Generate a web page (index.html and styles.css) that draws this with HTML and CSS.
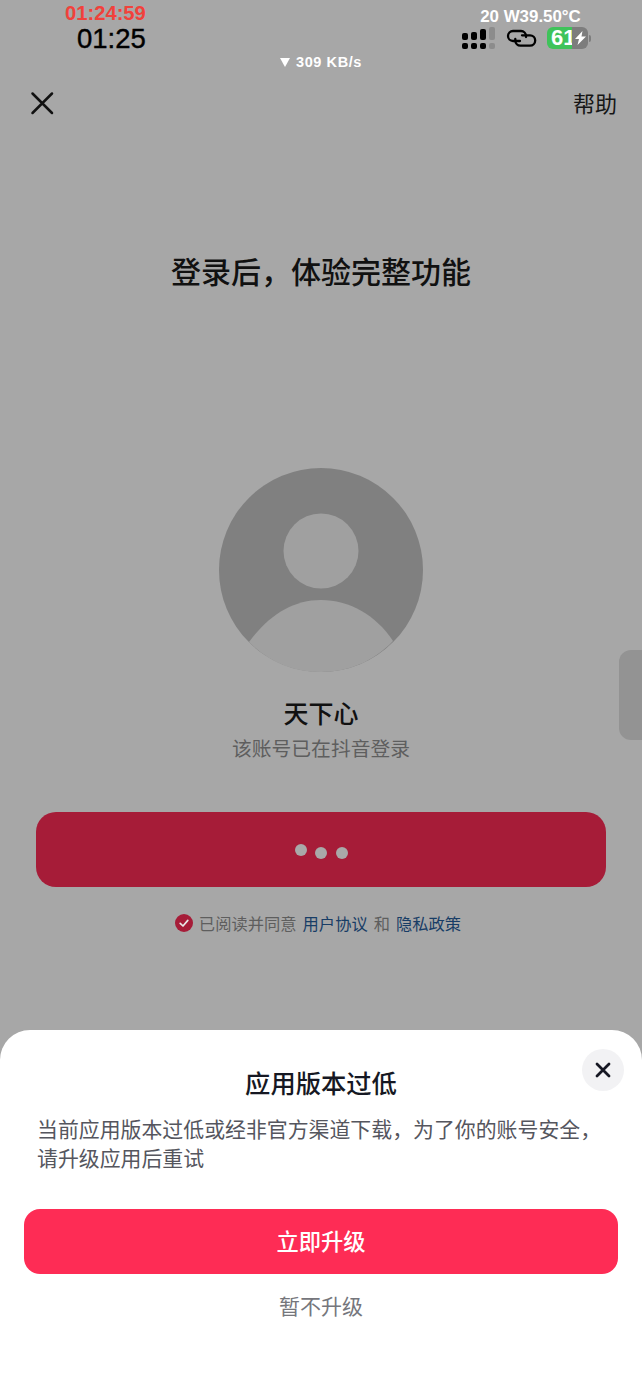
FILE: index.html
```html
<!DOCTYPE html>
<html lang="zh-CN">
    <head>
        <title>登录</title>
        <meta name="viewport" content="width=device-width, initial-scale=1.0">
        <link rel="stylesheet" href="styles.css">
    </head>
    <body>
        <div class="screen">
            <div class="status">
                <div class="clock">
                    <div class="clock-red">01:24:59</div>
                    <div class="clock-main">01:25</div>
                </div>
                <div class="status-right">
                    <div class="power">20 W39.50°C</div>
                    <div class="icons">
                        <svg width="33" height="22" viewBox="0 0 33 22" fill="#000">
                            <rect x="0" y="6" width="6" height="7" rx="2"/>
                            <rect x="0" y="16" width="6" height="6" rx="2"/>
                            <rect x="9" y="5" width="6" height="8" rx="2"/>
                            <rect x="9" y="16" width="6" height="6" rx="2"/>
                            <rect x="18" y="2" width="6" height="11" rx="2"/>
                            <rect x="18" y="16" width="6" height="6" rx="2"/>
                            <rect x="27" y="0" width="6" height="13" rx="2" fill="#8c8c8c"/>
                            <rect x="27" y="16" width="6" height="6" rx="2" fill="#8c8c8c"/>
                        </svg>
                        <svg class="link" width="31" height="22" viewBox="0 0 31 22" fill="none" stroke="#000" stroke-width="2.300" stroke-linecap="round">
                            <path d="M14 14H7A5 5 0 0 1 7 4H15A5 5 0 0 1 20 9V10"/>
                            <path d="M16 8.300H24A5.200 5.200 0 0 1 24 18.700H14.500A5.200 5.200 0 0 1 9.300 13.500V12"/>
                        </svg>
                        <div class="battery">
                            <div class="battery-fill">61</div>
                            <div class="battery-rest">
                                <svg width="11" height="14" viewBox="0 0 11 14" fill="#fff"><path d="M7.500 0 0 8h4l-1.500 6L11 5.500H6.500z"/></svg>
                            </div>
                            <div class="battery-cap"></div>
                        </div>
                    </div>
                </div>
            </div>
            <div class="speed"><span class="speed-arrow"></span>309 KB/s</div>

            <div class="nav">
                <svg width="26" height="26" viewBox="0 0 26 26" stroke="#111" stroke-width="2.500" stroke-linecap="round">
                    <path d="M3.500 3.500 23 23M23 3.500 3.500 23"/>
                </svg>
                <span class="help">帮助</span>
            </div>

            <h1 class="headline">登录后，体验完整功能</h1>

            <svg class="avatar" width="204" height="204" viewBox="0 0 204 204">
                <circle cx="102" cy="102" r="102" fill="#808080"/>
                <circle cx="102" cy="83" r="37.500" fill="#a0a0a0"/>
                <path d="M30 174C50 147 74 132 102 132s55 15 72 41C155 193 130 204 102 204S50 194 30 174z" fill="#a0a0a0"/>
            </svg>
            <div class="name">天下心</div>
            <div class="note">该账号已在抖音登录</div>

            <div class="login-btn">
                <span class="dot dot-high"></span>
                <span class="dot"></span>
                <span class="dot"></span>
            </div>

            <div class="agree">
                <svg width="18" height="18" viewBox="0 0 18 18">
                    <circle cx="9" cy="9" r="9" fill="#a61c38"/>
                    <path d="M5.200 9.300 8 12l4.800-5.600" fill="none" stroke="#e8e8e8" stroke-width="1.700" stroke-linecap="round" stroke-linejoin="round"/>
                </svg>
                <span>已阅读并同意</span>
                <a class="link-text">用户协议</a>
                <span>和</span>
                <a class="link-text">隐私政策</a>
            </div>

            <div class="blob"></div>
            <div class="side-tab"></div>

            <div class="sheet">
                <button class="sheet-close">
                    <svg width="16" height="16" viewBox="0 0 16 16" stroke="#161823" stroke-width="2.800" stroke-linecap="round">
                        <path d="M2 2 14 14M14 2 2 14"/>
                    </svg>
                </button>
                <h2 class="sheet-title">应用版本过低</h2>
                <p class="sheet-text">当前应用版本过低或经非官方渠道下载，为了你的账号安全，请升级应用后重试</p>
                <div class="upgrade-btn">立即升级</div>
                <div class="later">暂不升级</div>
            </div>
        </div>
    </body>
</html>
```

FILE: styles.css
```css
* {
    box-sizing: border-box;
    margin: 0;
}

html {
    background: #a7a7a7;
    font-family: "Noto Sans CJK SC", "Liberation Sans", sans-serif;
}

body {
    color: #111;
}

.screen {
    position: relative;
    width: 642px;
    height: 1389px;
    overflow: hidden;
    display: flex;
    flex-direction: column;
    align-items: center;
    background: #a7a7a7;
}

.status {
    width: 100%;
    height: 52px;
    padding: 3px 51px 0 65px;
    display: flex;
    justify-content: space-between;
    font-family: "Liberation Sans", sans-serif;
}

.clock {
    display: flex;
    flex-direction: column;
    align-items: flex-end;
}

.clock-red {
    color: #f1413b;
    font-size: 20.200px;
    line-height: 20px;
    font-weight: 700;
}

.clock-main {
    color: #000;
    font-size: 27.500px;
    line-height: 31px;
    -webkit-text-stroke: .4px #000;
}

.status-right {
    display: flex;
    flex-direction: column;
    align-items: center;
}

.power {
    color: #fff;
    font-size: 16.900px;
    line-height: 18px;
    font-weight: 700;
    margin-top: 5px;
    margin-left: 8px;
}

.icons {
    display: flex;
    align-items: center;
    gap: 10.500px;
    margin-top: 1px;
}

.battery {
    display: flex;
    align-items: center;
    height: 22px;
}

.battery-fill {
    width: 25px;
    height: 22px;
    background: #3fc35a;
    border-radius: 6px 0 0 6px;
    color: #fff;
    font-size: 22px;
    line-height: 22px;
    font-weight: 700;
    padding-left: 4px;
    white-space: nowrap;
}

.battery-rest {
    width: 16px;
    height: 22px;
    background: #7d7d7d;
    border-radius: 0 6px 6px 0;
    display: flex;
    align-items: center;
    justify-content: center;
}

.battery-cap {
    width: 2px;
    height: 7px;
    margin-left: 1px;
    background: #7d7d7d;
    border-radius: 0 2px 2px 0;
}

.speed {
    color: #fff;
    font-family: "Liberation Sans", sans-serif;
    font-size: 14.500px;
    line-height: 16px;
    font-weight: 700;
    letter-spacing: .6px;
    margin-top: 2px;
    display: flex;
    align-items: center;
    gap: 6px;
}

.speed-arrow {
    width: 0;
    height: 0;
    border-left: 5px solid transparent;
    border-right: 5px solid transparent;
    border-top: 9px solid #fff;
}

.nav {
    width: 100%;
    margin-top: 17px;
    padding: 0 25px 0 29px;
    display: flex;
    justify-content: space-between;
    align-items: center;
    height: 32px;
}

.help {
    font-size: 22px;
    color: #161616;
    margin-bottom: 2px;
}

.headline {
    margin-top: 129px;
    font-size: 30px;
    line-height: 44px;
    font-weight: 500;
}

.avatar {
    display: block;
    margin-top: 176px;
}

.name {
    margin-top: 22px;
    font-size: 25px;
    line-height: 36px;
    font-weight: 500;
}

.note {
    margin-top: 4px;
    font-size: 19.800px;
    line-height: 28px;
    color: #5e5e5e;
}

.login-btn {
    width: 570px;
    height: 75px;
    margin-top: 50px;
    background: #a61c38;
    border-radius: 20px;
    display: flex;
    justify-content: center;
    align-items: center;
    gap: 8.500px;
}

.dot {
    width: 12px;
    height: 12px;
    border-radius: 50%;
    background: #a9a9a9;
    margin-top: 6px;
}

.dot-high {
    margin-top: 1px;
}

.agree {
    margin-top: 24px;
    margin-right: 6px;
    display: flex;
    align-items: center;
    gap: 6px;
    font-size: 16.300px;
    line-height: 24px;
    color: #5e5e5e;
}

.link-text {
    color: #183d66;
}

.blob {
    position: absolute;
    left: 482px;
    top: 708px;
    width: 90px;
    height: 92px;
    border-radius: 40%;
    background: rgba(255, 255, 255, .008);
}

.side-tab {
    position: absolute;
    right: 0;
    top: 650px;
    width: 23px;
    height: 90px;
    background: #939393;
    border-radius: 12px 0 0 12px;
}

.sheet {
    position: absolute;
    left: 0;
    right: 0;
    top: 1030px;
    bottom: 0;
    padding: 33px 24px 0;
    background: #fff;
    border-radius: 30px 30px 0 0;
    text-align: center;
}

.sheet-close {
    position: absolute;
    top: 19px;
    right: 18px;
    width: 42px;
    height: 42px;
    border: none;
    padding: 0;
    border-radius: 50%;
    background: #f2f2f4;
    display: flex;
    align-items: center;
    justify-content: center;
}

.sheet-title {
    font-size: 25.300px;
    line-height: 38px;
    font-weight: 500;
    color: #161823;
}

.sheet-text {
    margin-top: 13px;
    padding: 0 13px;
    font-size: 20.900px;
    line-height: 29px;
    color: #55565e;
    text-align: left;
}

.upgrade-btn {
    margin-top: 37px;
    height: 65px;
    border-radius: 16px;
    background: #fe2c55;
    color: #fff;
    font-size: 22.300px;
    line-height: 63px;
    font-weight: 500;
}

.later {
    margin-top: 16px;
    font-size: 21px;
    line-height: 30px;
    color: #75767c;
}
```
